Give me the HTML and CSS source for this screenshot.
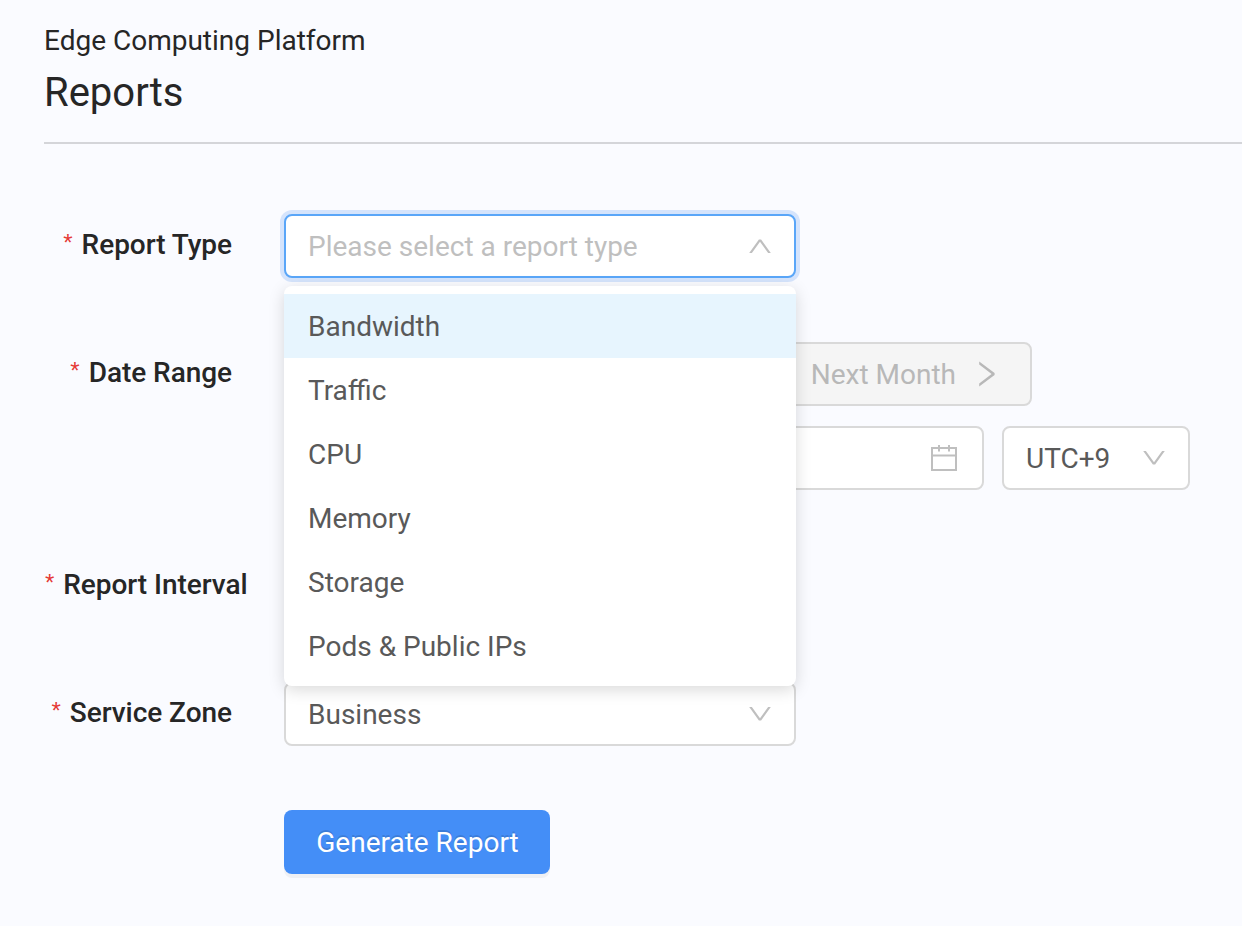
FILE: index.html
```html
<!DOCTYPE html>
<html lang="en">
<head>
<meta charset="utf-8">
<title>Reports</title>
<link rel="stylesheet" href="styles.css">
</head>
<body>
<header class="page-header">
  <div class="platform">Edge Computing Platform</div>
  <h1 class="title">Reports</h1>
</header>
<main class="form">
  <div class="row row-type">
    <div class="label"><span class="star">*</span><span>Report Type</span></div>
    <div class="control">
      <div class="box select focused"><span class="placeholder">Please select a report type</span>
        <svg class="chevron" viewBox="0 0 22 14"><path d="M0.2 14 9.9 0.5h2.2L21.8 14h-2.7L11 2.8 2.9 14z"/></svg>
      </div>
      <ul class="menu">
        <li class="option active">Bandwidth</li>
        <li class="option">Traffic</li>
        <li class="option">CPU</li>
        <li class="option">Memory</li>
        <li class="option">Storage</li>
        <li class="option">Pods &amp; Public IPs</li>
      </ul>
    </div>
  </div>
  <div class="row row-date">
    <div class="label"><span class="star">*</span><span>Date Range</span></div>
    <div class="control stack">
      <div class="box month"><span>Next Month</span>
        <svg class="next" viewBox="0 0 16 26"><path d="M0.2 0.6 15.6 12v2L0.2 25.4v-2.9L12.6 13 0.2 3.5z"/></svg>
      </div>
      <div class="line">
        <div class="box range">
          <svg class="calendar" viewBox="0 0 26 26"><path d="M1 3h24v22H1zM1 10.5h24M8 0v6.5M18 0v6.5"/></svg>
        </div>
        <div class="box zone"><span>UTC+9</span>
          <svg class="chevron" viewBox="0 0 22 14"><path d="M0.2 0 9.9 13.5h2.2L21.8 0h-2.7L11 11.2 2.9 0z"/></svg>
        </div>
      </div>
    </div>
  </div>
  <div class="row row-interval">
    <div class="label"><span class="star">*</span><span>Report Interval</span></div>
  </div>
  <div class="row row-service">
    <div class="label"><span class="star">*</span><span>Service Zone</span></div>
    <div class="control">
      <div class="box select"><span>Business</span>
        <svg class="chevron" viewBox="0 0 22 14"><path d="M0.2 0 9.9 13.5h2.2L21.8 0h-2.7L11 11.2 2.9 0z"/></svg>
      </div>
    </div>
  </div>
  <button class="submit" type="button">Generate Report</button>
</main>
</body>
</html>
```
FILE: styles.css
```css
* { box-sizing: border-box; }
body {
  margin: 0;
  height: 926px;
  overflow: hidden;
  background: #fafbff;
  color: #595959;
  font: 28px/62px Roboto, sans-serif;
}
.page-header {
  height: 144px;
  margin-left: 44px;
  padding-top: 19px;
  border-bottom: 2px solid #d4d5d9;
  color: #262626;
}
.platform { line-height: 44px; }
.title { margin: 0; font-size: 40px; font-weight: 400; line-height: 60px; }
.form { padding: 70px 0 0 44px; }
.row { display: flex; height: 64px; }
.row-type { margin-bottom: 64px; }
.row-date { height: 148px; margin-bottom: 64px; }
.row-interval { margin-bottom: 64px; }
.label {
  display: flex;
  justify-content: flex-end;
  gap: 9px;
  width: 188px;
  margin-right: 52px;
  color: #262626;
  font-weight: 500;
  letter-spacing: -0.05px;
  white-space: nowrap;
}
.row-interval .label { justify-content: flex-start; padding-left: 1px; }
.star { color: #e53935; font: 400 24px/58px "Liberation Sans", sans-serif; }
.control { position: relative; }
.box {
  display: flex;
  align-items: center;
  justify-content: space-between;
  height: 64px;
  padding: 0 23px 0 22px;
  border: 2px solid #d9d9d9;
  border-radius: 8px;
  background: #fff;
}
.box span { padding-top: 2px; line-height: 60px; }
.select { width: 512px; }
.focused { border-color: #5aa6f8; box-shadow: 0 0 0 4px #d5e4fc; }
.placeholder { color: #bfbfbf; }
.chevron { width: 22px; height: 14px; fill: #bfbfbf; }
.menu {
  position: absolute;
  z-index: 2;
  top: 72px;
  left: 0;
  width: 512px;
  height: 400px;
  margin: 0;
  padding: 8px 0;
  list-style: none;
  border-radius: 8px;
  background: #fff;
  box-shadow: 0 4px 16px rgba(0, 0, 0, .15);
}
.option { height: 64px; padding: 0 24px; line-height: 66px; }
.active { background: #e7f5fe; }
.stack { display: flex; flex-direction: column; gap: 20px; }
.month {
  justify-content: flex-end;
  gap: 23px;
  width: 748px;
  padding-right: 35px;
  background: #f5f5f5;
  color: #b8b8b8;
}
.next { width: 16px; height: 26px; fill: #b8b8b8; }
.line { display: flex; gap: 18px; }
.range { width: 700px; padding-right: 25px; justify-content: flex-end; }
.calendar { width: 26px; height: 26px; fill: none; stroke: #bfbfbf; stroke-width: 2; }
.zone { width: 188px; }
.submit {
  display: block;
  width: 266px;
  height: 64px;
  margin: 64px 0 0 240px;
  padding: 2px 0 0 1px;
  border: 0;
  border-radius: 8px;
  background: #448ef7;
  color: #fff;
  font: 28px/62px Roboto, sans-serif;
  text-shadow: 0 -2px 0 rgba(0, 0, 0, .12);
  box-shadow: 0 4px 0 rgba(0, 0, 0, .045);
}
```
